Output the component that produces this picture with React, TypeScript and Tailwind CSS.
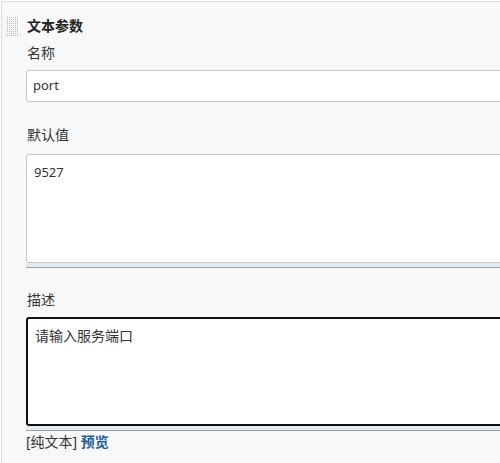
import type { ReactNode } from 'react'

// ── Grip handle ────────────────────────────────────────────────────────────────

function Grip() {
  const dots: ReactNode[] = []
  for (let r = 0; r < 10; r++) {
    for (let c = 0; c < 6; c++) {
      dots.push(<rect key={`${r}-${c}`} x={c * 2} y={r * 2} width="1" height="1" fill="#b8b8b8" />)
    }
  }
  return (
    <svg width="12" height="20" viewBox="0 0 12 20" className="block">
      {dots}
    </svg>
  )
}

// ── Textarea with resize strip ─────────────────────────────────────────────────

function Area({ children, focused }: { children: ReactNode; focused?: boolean }) {
  return (
    <div className="w-[600px]">
      <div
        className={`h-[109px] rounded-[3px] bg-white px-[7px] pt-[8px] text-[#333] ${
          focused ? 'border-2 border-[#111] px-[6px] pt-[7px]' : 'border border-[#c8c8c8]'
        }`}
      >
        {children}
      </div>
      <div className="h-[5px] bg-[#e6eaec] border-b border-[#96a4ae]" />
    </div>
  )
}

// ── Main page ─────────────────────────────────────────────────────────────────

export default function App() {
  const cjk = { fontFamily: '"Noto Sans", "Noto Sans CJK SC", sans-serif' }

  return (
    <div className="w-[500px] h-[463px] overflow-hidden bg-white pt-px pl-px" style={cjk}>
      <div className="h-full flex border-t border-l border-[#dcdcdc] bg-[#f8f8f8]">
        {/* Drag handle */}
        <div className="w-[24px] shrink-0 pl-[5px] pt-[15px]">
          <Grip />
        </div>

        {/* Fields */}
        <div className="flex-1 pt-[14px] text-[#333]">
          <div className="pl-px text-[14px] font-bold leading-[20px] text-[#222]">文本参数</div>

          <div className="mt-[7px] pl-px text-[14px] leading-[20px]">名称</div>
          <div className="mt-[7px] w-[600px] h-[32px] rounded-[3px] border border-[#c8c8c8] bg-white px-[6px] flex items-center text-[13px]">
            port
          </div>

          <div className="mt-[23px] pl-px text-[14px] leading-[20px]">默认值</div>
          <div className="mt-[9px] text-[13px] leading-[18px]">
            <Area>9527</Area>
          </div>

          <div className="mt-[22px] pl-px text-[14px] leading-[20px]">描述</div>
          <div className="mt-[7px] text-[14px] leading-[18px]">
            <Area focused>请输入服务端口</Area>
          </div>

          <div className="mt-px text-[14px] leading-[20px]">
            <span className="text-[#333]">[纯文本]</span>{' '}
            <span className="font-bold text-[#1d5f96]">预览</span>
          </div>
        </div>
      </div>
    </div>
  )
}
